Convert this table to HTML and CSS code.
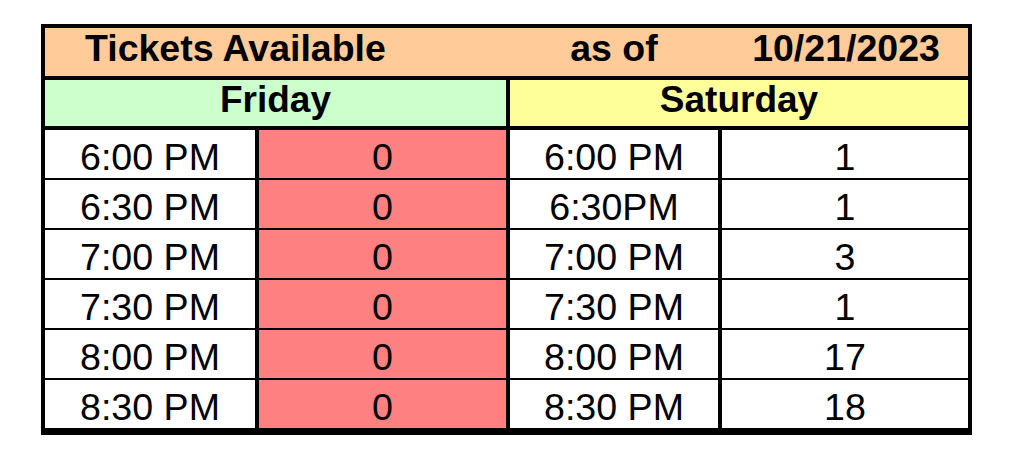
FILE: index.html
```html
<!DOCTYPE html>
<html lang="en">
<head>
<meta charset="utf-8">
<title>Tickets Available</title>
<link rel="stylesheet" href="styles.css">
</head>
<body>
<div class="sheet">
  <div class="title">
    <span class="t-main">Tickets Available</span>
    <span class="t-asof">as of</span>
    <span class="t-date">10/21/2023</span>
  </div>
  <div class="day fri">Friday</div>
  <div class="day sat">Saturday</div>

  <div class="cell">6:00 PM</div><div class="cell red">0</div><div class="cell">6:00 PM</div><div class="cell">1</div>
  <div class="cell">6:30 PM</div><div class="cell red">0</div><div class="cell">6:30PM</div><div class="cell">1</div>
  <div class="cell">7:00 PM</div><div class="cell red">0</div><div class="cell">7:00 PM</div><div class="cell">3</div>
  <div class="cell">7:30 PM</div><div class="cell red">0</div><div class="cell">7:30 PM</div><div class="cell">1</div>
  <div class="cell">8:00 PM</div><div class="cell red">0</div><div class="cell">8:00 PM</div><div class="cell">17</div>
  <div class="cell">8:30 PM</div><div class="cell red">0</div><div class="cell">8:30 PM</div><div class="cell">18</div>
</div>
</body>
</html>
```

FILE: styles.css
```css
html, body {
  margin: 0;
  background: #ffffff;
}

body {
  padding: 24px 0 0 41px;
  font-family: "Liberation Sans", Arial, sans-serif;
  color: #000;
}

.sheet {
  display: grid;
  grid-template-columns: 210px 247px 208px 246px;
  column-gap: 4px;
  width: 923px;
  border: 4px solid #000;
  border-bottom-width: 5px;
  background: #000;
}

.title {
  grid-column: 1 / -1;
  display: grid;
  grid-template-columns: 465px 208px 1fr;
  align-items: center;
  height: 48px;
  box-sizing: border-box;
  padding-bottom: 7px;
  margin-bottom: 4px;
  background: #ffcc99;
  font-weight: bold;
  font-size: 37.5px;
  line-height: 41px;
}

.t-main {
  padding-left: 40px;
}

.t-asof {
  text-align: center;
}

.t-date {
  text-align: center;
  padding-left: 6px;
}

.day {
  grid-column: span 2;
  height: 46px;
  box-sizing: border-box;
  padding-bottom: 6px;
  margin-bottom: 4px;
  display: flex;
  align-items: center;
  justify-content: center;
  font-weight: bold;
  font-size: 37px;
}

.fri {
  background: #ccffcc;
}

.sat {
  background: #ffff99;
}

.cell {
  height: 50px;
  box-sizing: border-box;
  border-bottom: 2px solid #000;
  padding-top: 6px;
  display: flex;
  align-items: center;
  justify-content: center;
  background: #ffffff;
  font-size: 37.6px;
}

.cell.red {
  background: #ff8080;
}
```
